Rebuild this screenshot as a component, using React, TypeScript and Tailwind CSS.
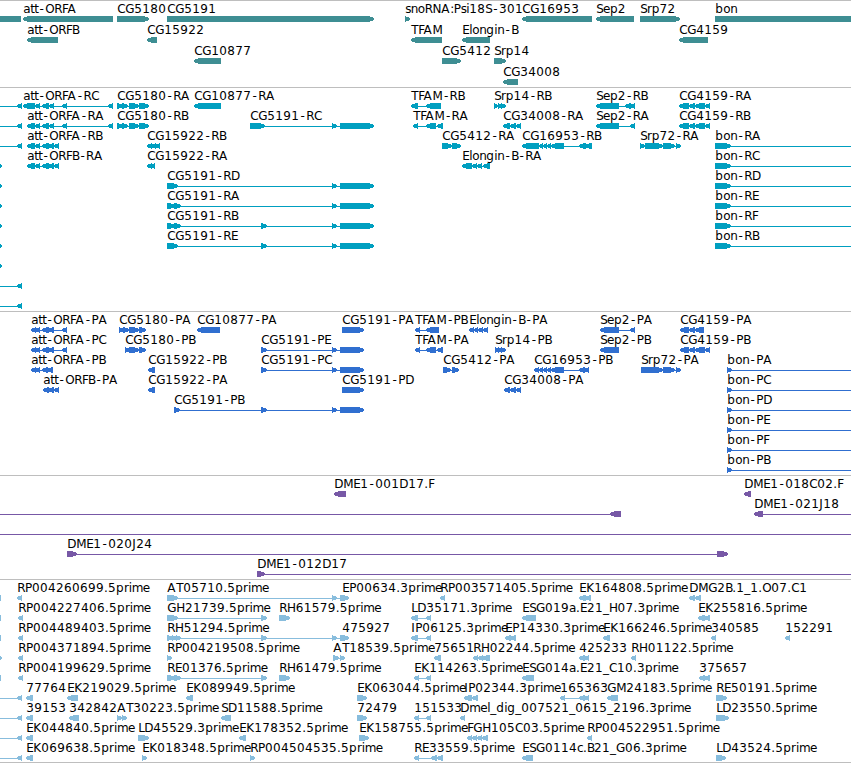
import React from "react";

type Dir = "L" | "R";

// row, direction, label, then the [start, end] pairs of the exons
type Feature = [number, Dir, string, number[][]];

type TrackData = {
  name: string;
  height: string;
  color: string;
  pitch: number;
  features: Feature[];
};

const OFF_LEFT = [-30, -20];
const OFF_RIGHT = [870, 880];

const ORFA_TAIL = [[35, 40], [42, 49], [49, 54], [62, 67], [108, 113]];
const ORF_SHORT = [[27, 35], [35, 40], [42, 49], [48, 54], [54, 59]];
const CG5180 = [[117, 123], [122, 128], [129, 139], [139, 149]];
const CG4159 = [[679, 689], [689, 695], [695, 705], [705, 710]];
const CG5191_END = [[332, 337], [340, 374]];
const BON = [[715, 731], OFF_RIGHT];
const BON_P = [[727, 732], OFF_RIGHT];
const ORFA_P = [[31, 36], [35, 40], [42, 49], [48, 54], [62, 67]];

const TRACKS: TrackData[] = [
  {
    name: "genes",
    height: "h-[87px]",
    color: "text-[#3e8e93]",
    pitch: 21,
    features: [
      [0, "L", "", [[-20, 21]]],
      [0, "L", "att-ORFA", [[23, 113]]],
      [0, "R", "CG5180", [[117, 149]]],
      [0, "R", "CG5191", [[167, 374]]],
      [0, "R", "snoRNA:Psi18S-301", [[405, 410]]],
      [0, "L", "CG16953", [[522, 592]]],
      [0, "L", "Sep2", [[596, 634]]],
      [0, "R", "Srp72", [[640, 680]]],
      [0, "R", "bon", [[715, 880]]],
      [1, "L", "att-ORFB", [[27, 58]]],
      [1, "L", "CG15922", [[147, 157]]],
      [1, "L", "TFAM", [[411, 442]]],
      [1, "L", "Elongin-B", [[462, 490]]],
      [1, "L", "CG4159", [[679, 708]]],
      [2, "L", "CG10877", [[194, 221]]],
      [2, "R", "CG5412", [[442, 461]]],
      [2, "R", "Srp14", [[494, 506]]],
      [3, "L", "CG34008", [[503, 518]]],
    ],
  },
  {
    name: "transcripts",
    height: "h-[224px]",
    color: "text-[#009fc0]",
    pitch: 20,
    features: [
      [0, "L", "", [OFF_LEFT, [17, 22]]],
      [0, "L", "att-ORFA-RC", [[23, 35], ...ORFA_TAIL]],
      [0, "R", "CG5180-RA", CG5180],
      [0, "L", "CG10877-RA", [[194, 221]]],
      [0, "L", "TFAM-RB", [[411, 418], [426, 441]]],
      [0, "R", "Srp14-RB", [[494, 498], [498, 502], [501, 506]]],
      [0, "L", "Sep2-RB", [[596, 619], [625, 631], [630, 635]]],
      [0, "L", "CG4159-RA", CG4159],
      [1, "L", "", [OFF_LEFT, [17, 22]]],
      [1, "L", "att-ORFA-RA", [[27, 35], ...ORFA_TAIL]],
      [1, "R", "CG5180-RB", CG5180],
      [1, "R", "CG5191-RC", [[250, 265], ...CG5191_END]],
      [1, "L", "TFAM-RA", [[413, 418], [426, 436], [437, 443]]],
      [1, "L", "CG34008-RA", [[503, 510], [510, 516], [516, 521]]],
      [1, "L", "Sep2-RA", [[596, 619], [630, 635]]],
      [1, "L", "CG4159-RB", CG4159],
      [2, "L", "", [OFF_LEFT, [17, 22]]],
      [2, "L", "att-ORFA-RB", ORF_SHORT],
      [2, "L", "CG15922-RB", [[147, 152], [151, 156], [155, 160]]],
      [2, "R", "CG5412-RA", [[442, 452], [452, 461]]],
      [2, "L", "CG16953-RB", [[522, 539], [539, 543], [543, 547], [547, 551], [551, 564], [579, 586], [585, 592]]],
      [2, "R", "Srp72-RA", [[640, 645], [645, 663], [663, 675], [676, 681]]],
      [2, "R", "bon-RA", BON],
      [3, "R", "", [[-3, 2]]],
      [3, "L", "att-ORFB-RA", ORF_SHORT],
      [3, "L", "CG15922-RA", [[147, 152], [151, 155]]],
      [3, "L", "Elongin-B-RA", [[462, 472], [472, 477], [477, 482], [483, 490]]],
      [3, "R", "bon-RC", BON],
      [4, "R", "", [[-3, 2]]],
      [4, "R", "CG5191-RD", [[167, 178], ...CG5191_END]],
      [4, "R", "bon-RD", BON],
      [5, "R", "", [[-3, 2]]],
      [5, "R", "CG5191-RA", [[167, 175], [174, 181], ...CG5191_END]],
      [5, "R", "bon-RE", BON],
      [6, "R", "", [[-3, 2]]],
      [6, "R", "CG5191-RB", [[167, 175], [174, 181], [261, 267], ...CG5191_END]],
      [6, "R", "bon-RF", BON],
      [7, "R", "", [[-3, 2]]],
      [7, "R", "CG5191-RE", [[167, 178], [261, 267], ...CG5191_END]],
      [7, "R", "bon-RB", BON],
      [8, "R", "", [[-3, 2]]],
      [9, "L", "", [OFF_LEFT, [17, 22]]],
      [10, "L", "", [OFF_LEFT, [17, 22]]],
    ],
  },
  {
    name: "proteins",
    height: "h-[164px]",
    color: "text-[#306fd0]",
    pitch: 20,
    features: [
      [0, "L", "att-ORFA-PA", ORFA_P],
      [0, "R", "CG5180-PA", [[119, 124], [123, 129], [129, 139], [139, 146]]],
      [0, "L", "CG10877-PA", [[197, 220]]],
      [0, "R", "CG5191-PA", [[342, 364]]],
      [0, "L", "TFAM-PB", [[415, 420], [426, 439]]],
      [0, "L", "Elongin-B-PA", [[469, 474], [474, 478], [478, 483], [483, 488]]],
      [0, "L", "Sep2-PA", [[600, 619], [630, 635]]],
      [0, "L", "CG4159-PA", [[680, 689], [689, 695], [695, 704]]],
      [1, "L", "att-ORFA-PC", ORFA_P],
      [1, "R", "CG5180-PB", [[125, 130], [129, 139], [139, 146]]],
      [1, "R", "CG5191-PE", [[261, 267], [332, 337], [340, 364]]],
      [1, "L", "TFAM-PA", [[415, 420], [426, 436], [437, 443]]],
      [1, "R", "Srp14-PB", [[495, 499], [498, 502], [501, 506]]],
      [1, "L", "Sep2-PB", [[600, 619]]],
      [1, "L", "CG4159-PB", [[680, 689], [689, 695], [695, 705], [705, 710]]],
      [2, "L", "att-ORFA-PB", [[31, 36], [35, 40], [42, 48], [47, 53]]],
      [2, "L", "CG15922-PB", [[148, 155]]],
      [2, "R", "CG5191-PC", [[261, 267], [332, 337], [340, 364]]],
      [2, "R", "CG5412-PA", [[443, 451], [452, 459]]],
      [2, "L", "CG16953-PB", [[534, 539], [539, 543], [543, 547], [547, 551], [551, 564], [579, 585], [584, 589]]],
      [2, "R", "Srp72-PA", [[641, 663], [663, 675], [676, 681]]],
      [2, "R", "bon-PA", BON_P],
      [3, "L", "att-ORFB-PA", [[43, 49], [48, 54], [54, 59]]],
      [3, "L", "CG15922-PA", [[148, 155]]],
      [3, "R", "CG5191-PD", [[342, 364]]],
      [3, "L", "CG34008-PA", [[504, 510], [510, 516], [516, 521]]],
      [3, "R", "bon-PC", BON_P],
      [4, "R", "CG5191-PB", [[174, 180], [261, 267], [332, 337], [340, 364]]],
      [4, "R", "bon-PD", BON_P],
      [5, "R", "bon-PE", BON_P],
      [6, "R", "bon-PF", BON_P],
      [7, "R", "bon-PB", BON_P],
    ],
  },
  {
    name: "clones",
    height: "h-[104px]",
    color: "text-[#7758a6]",
    pitch: 20,
    features: [
      [0, "L", "DME1-001D17.F", [[334, 346]]],
      [0, "L", "DME1-018C02.F", [[744, 751]]],
      [1, "L", "", [OFF_LEFT, [610, 621]]],
      [1, "L", "DME1-021J18", [[754, 763], OFF_RIGHT]],
      [2, "L", "", [OFF_LEFT, OFF_RIGHT]],
      [3, "R", "DME1-020J24", [[67, 77], [717, 728]]],
      [4, "R", "DME1-012D17", [[257, 265], OFF_RIGHT]],
    ],
  },
  {
    name: "ests",
    height: "h-[183px]",
    color: "text-[#88bddd]",
    pitch: 20,
    features: [
      [0, "L", "", [[-8, 1]]],
      [0, "L", "RP004260699.5prime", [[17, 22]]],
      [0, "R", "AT05710.5prime", [[167, 178], [332, 337], [340, 349]]],
      [0, "R", "EP00634.3prime", [[342, 349]]],
      [0, "L", "RP003571405.5prime", [[440, 445]]],
      [0, "L", "EK164808.5prime", [[579, 586], [585, 591]]],
      [0, "L", "DMG2B.1_1.O07.C1", [[689, 695], [695, 701]]],
      [1, "L", "", [[-8, 1]]],
      [1, "L", "RP004227406.5prime", [[18, 23]]],
      [1, "R", "GH21739.5prime", [[167, 178], [261, 267]]],
      [1, "R", "RH61579.5prime", [[279, 290]]],
      [1, "L", "LD35171.3prime", [[411, 418], [426, 431]]],
      [1, "L", "ESG019a.E21_H07.3prime", [[522, 536]]],
      [1, "L", "EK255816.5prime", [[698, 705], [704, 710]]],
      [2, "L", "", [[-8, 1]]],
      [2, "L", "RP004489403.5prime", [[18, 23]]],
      [2, "R", "RH51294.5prime", [[167, 173], [172, 177], [176, 181], [261, 267], [332, 337], [340, 349]]],
      [2, "R", "475927", [[342, 349]]],
      [2, "L", "IP06125.3prime", [[411, 418], [426, 431]]],
      [2, "L", "EP14330.3prime", [[505, 511], [510, 516]]],
      [2, "L", "EK166246.5prime", [[603, 610]]],
      [2, "L", "340585", [[711, 716]]],
      [2, "L", "152291", [[785, 790]]],
      [3, "R", "", [[-3, 2]]],
      [3, "L", "RP004371894.5prime", [[18, 23]]],
      [3, "R", "RP004219508.5prime", [[167, 172]]],
      [3, "R", "AT18539.5prime", [[333, 339], [340, 345]]],
      [3, "L", "75651", [[434, 441]]],
      [3, "L", "RH02244.5prime", [[473, 478], [478, 483], [482, 490]]],
      [3, "L", "425233", [[579, 585], [584, 589]]],
      [3, "L", "RH01122.5prime", [[631, 636]]],
      [4, "L", "", [[-8, 1]]],
      [4, "L", "RP004199629.5prime", [[18, 23]]],
      [4, "R", "RE01376.5prime", [[167, 175], [174, 181], [261, 267]]],
      [4, "R", "RH61479.5prime", [[279, 290]]],
      [4, "L", "EK114263.5prime", [[414, 419], [426, 431]]],
      [4, "L", "ESG014a.E21_C10.3prime", [[522, 534]]],
      [4, "L", "375657", [[699, 705], [704, 710]]],
      [5, "L", "", [OFF_LEFT, [17, 22]]],
      [5, "L", "77764", [[26, 33]]],
      [5, "L", "EK219029.5prime", [[67, 78]]],
      [5, "L", "EK089949.5prime", [[186, 193]]],
      [5, "R", "EK063044.5prime", [[357, 367]]],
      [5, "L", "IP02344.3prime", [[464, 472], [472, 478]]],
      [5, "L", "165363", [[560, 565], [579, 585], [584, 589]]],
      [5, "L", "GM24183.5prime", [[607, 618]]],
      [5, "R", "RE50191.5prime", [[716, 727]]],
      [6, "L", "", [OFF_LEFT, [17, 22]]],
      [6, "L", "39153", [[26, 33]]],
      [6, "L", "342842", [[69, 79]]],
      [6, "R", "AT30223.5prime", [[117, 122], [122, 127]]],
      [6, "L", "SD11588.5prime", [[221, 231]]],
      [6, "R", "72479", [[357, 367]]],
      [6, "L", "151533", [[414, 419], [426, 431]]],
      [6, "L", "Dmel_dig_007521_0615_2196.3prime", [[460, 465]]],
      [6, "R", "LD23550.5prime", [[716, 729]]],
      [7, "L", "", [OFF_LEFT, [17, 22]]],
      [7, "L", "EK044840.5prime", [[26, 33]]],
      [7, "R", "LD45529.3prime", [[138, 149]]],
      [7, "L", "EK178352.5prime", [[239, 246]]],
      [7, "R", "EK158755.5prime", [[359, 369]]],
      [7, "L", "FGH105C03.5prime", [[467, 472], [472, 477], [477, 482], [482, 488]]],
      [7, "L", "RP004522951.5prime", [[587, 592]]],
      [8, "L", "", [OFF_LEFT, [17, 22]]],
      [8, "L", "EK069638.5prime", [[26, 33]]],
      [8, "R", "EK018348.5prime", [[142, 147]]],
      [8, "R", "RP004504535.5prime", [[250, 255]]],
      [8, "L", "RE33559.5prime", [[414, 419], [431, 437], [437, 443]]],
      [8, "L", "ESG0114c.B21_G06.3prime", [[522, 533]]],
      [8, "R", "LD43524.5prime", [[716, 726]]],
    ],
  },
];

// advance of each glyph in pixels, 8 for the digits
const ADVANCE: Record<string, number> = {
  A: 9, B: 7, C: 8, D: 9, E: 7, F: 6, G: 9, H: 8.6, I: 4, J: 4, K: 8, L: 6,
  M: 10, N: 8.7, O: 9, P: 7, R: 7.8, S: 6.6, T: 7,
  a: 7, b: 8, c: 6, d: 8, e: 7, g: 8, i: 3, l: 3, m: 11, n: 7, o: 7, p: 7.8,
  r: 4.8, s: 5.5, t: 4,
  "-": 7, ".": 4, ":": 3.5, _: 6,
};

const glyphXs = (label: string, start: number) => {
  let x = start + 0.3;
  return label
    .split("")
    .map((ch, i) => {
      // tuck the A under the arm of the F
      if (ch === "A" && label[i - 1] === "F") x -= 0.7;
      const at = ch === "-" ? x + 1.3 : x;
      x += ADVANCE[ch] ?? 8;
      return at.toFixed(1);
    })
    .join(" ");
};

const arrow = (dir: Dir, a: number, b: number, y: number) => {
  const head = Math.min(5, b - a);
  return dir === "R"
    ? `${a},${y} ${b - head},${y} ${b},${y + 2} ${b},${y + 4} ${b - head},${y + 6} ${a},${y + 6}`
    : `${b},${y} ${a + head},${y} ${a},${y + 2} ${a},${y + 4} ${a + head},${y + 6} ${b},${y + 6}`;
};

const FeatureGlyph: React.FC<{ feature: Feature; pitch: number }> = ({
  feature,
  pitch,
}) => {
  const [row, dir, label, exons] = feature;
  const y = row * pitch;
  const start = exons[0][0];
  const end = exons[exons.length - 1][1];

  return (
    <g>
      {exons.length > 1 && (
        <rect x={start} y={y + 18} width={end - start} height={1} />
      )}
      {exons.map(([a, b]) => (
        <polygon key={a} points={arrow(dir, a, b, y + 15)} />
      ))}
      {label && (
        <text x={glyphXs(label, start)} y={y + 12} className="fill-black">
          {label}
        </text>
      )}
    </g>
  );
};

const Track: React.FC<{ track: TrackData }> = ({ track }) => (
  <section
    aria-label={track.name}
    className={`shrink-0 border-t border-[#bebebe] ${track.height} ${track.color}`}
  >
    <svg
      className="block h-full w-full fill-current text-[12px]"
      shapeRendering="crispEdges"
    >
      {track.features.map((feature, i) => (
        <FeatureGlyph key={i} feature={feature} pitch={track.pitch} />
      ))}
    </svg>
  </section>
);

const App: React.FC = () => {
  return (
    <main className="flex h-[763px] w-[851px] flex-col overflow-hidden border-b border-[#bebebe] bg-white font-['DejaVu_Sans',sans-serif]">
      {TRACKS.map((track) => (
        <Track key={track.name} track={track} />
      ))}
    </main>
  );
};

export default App;
